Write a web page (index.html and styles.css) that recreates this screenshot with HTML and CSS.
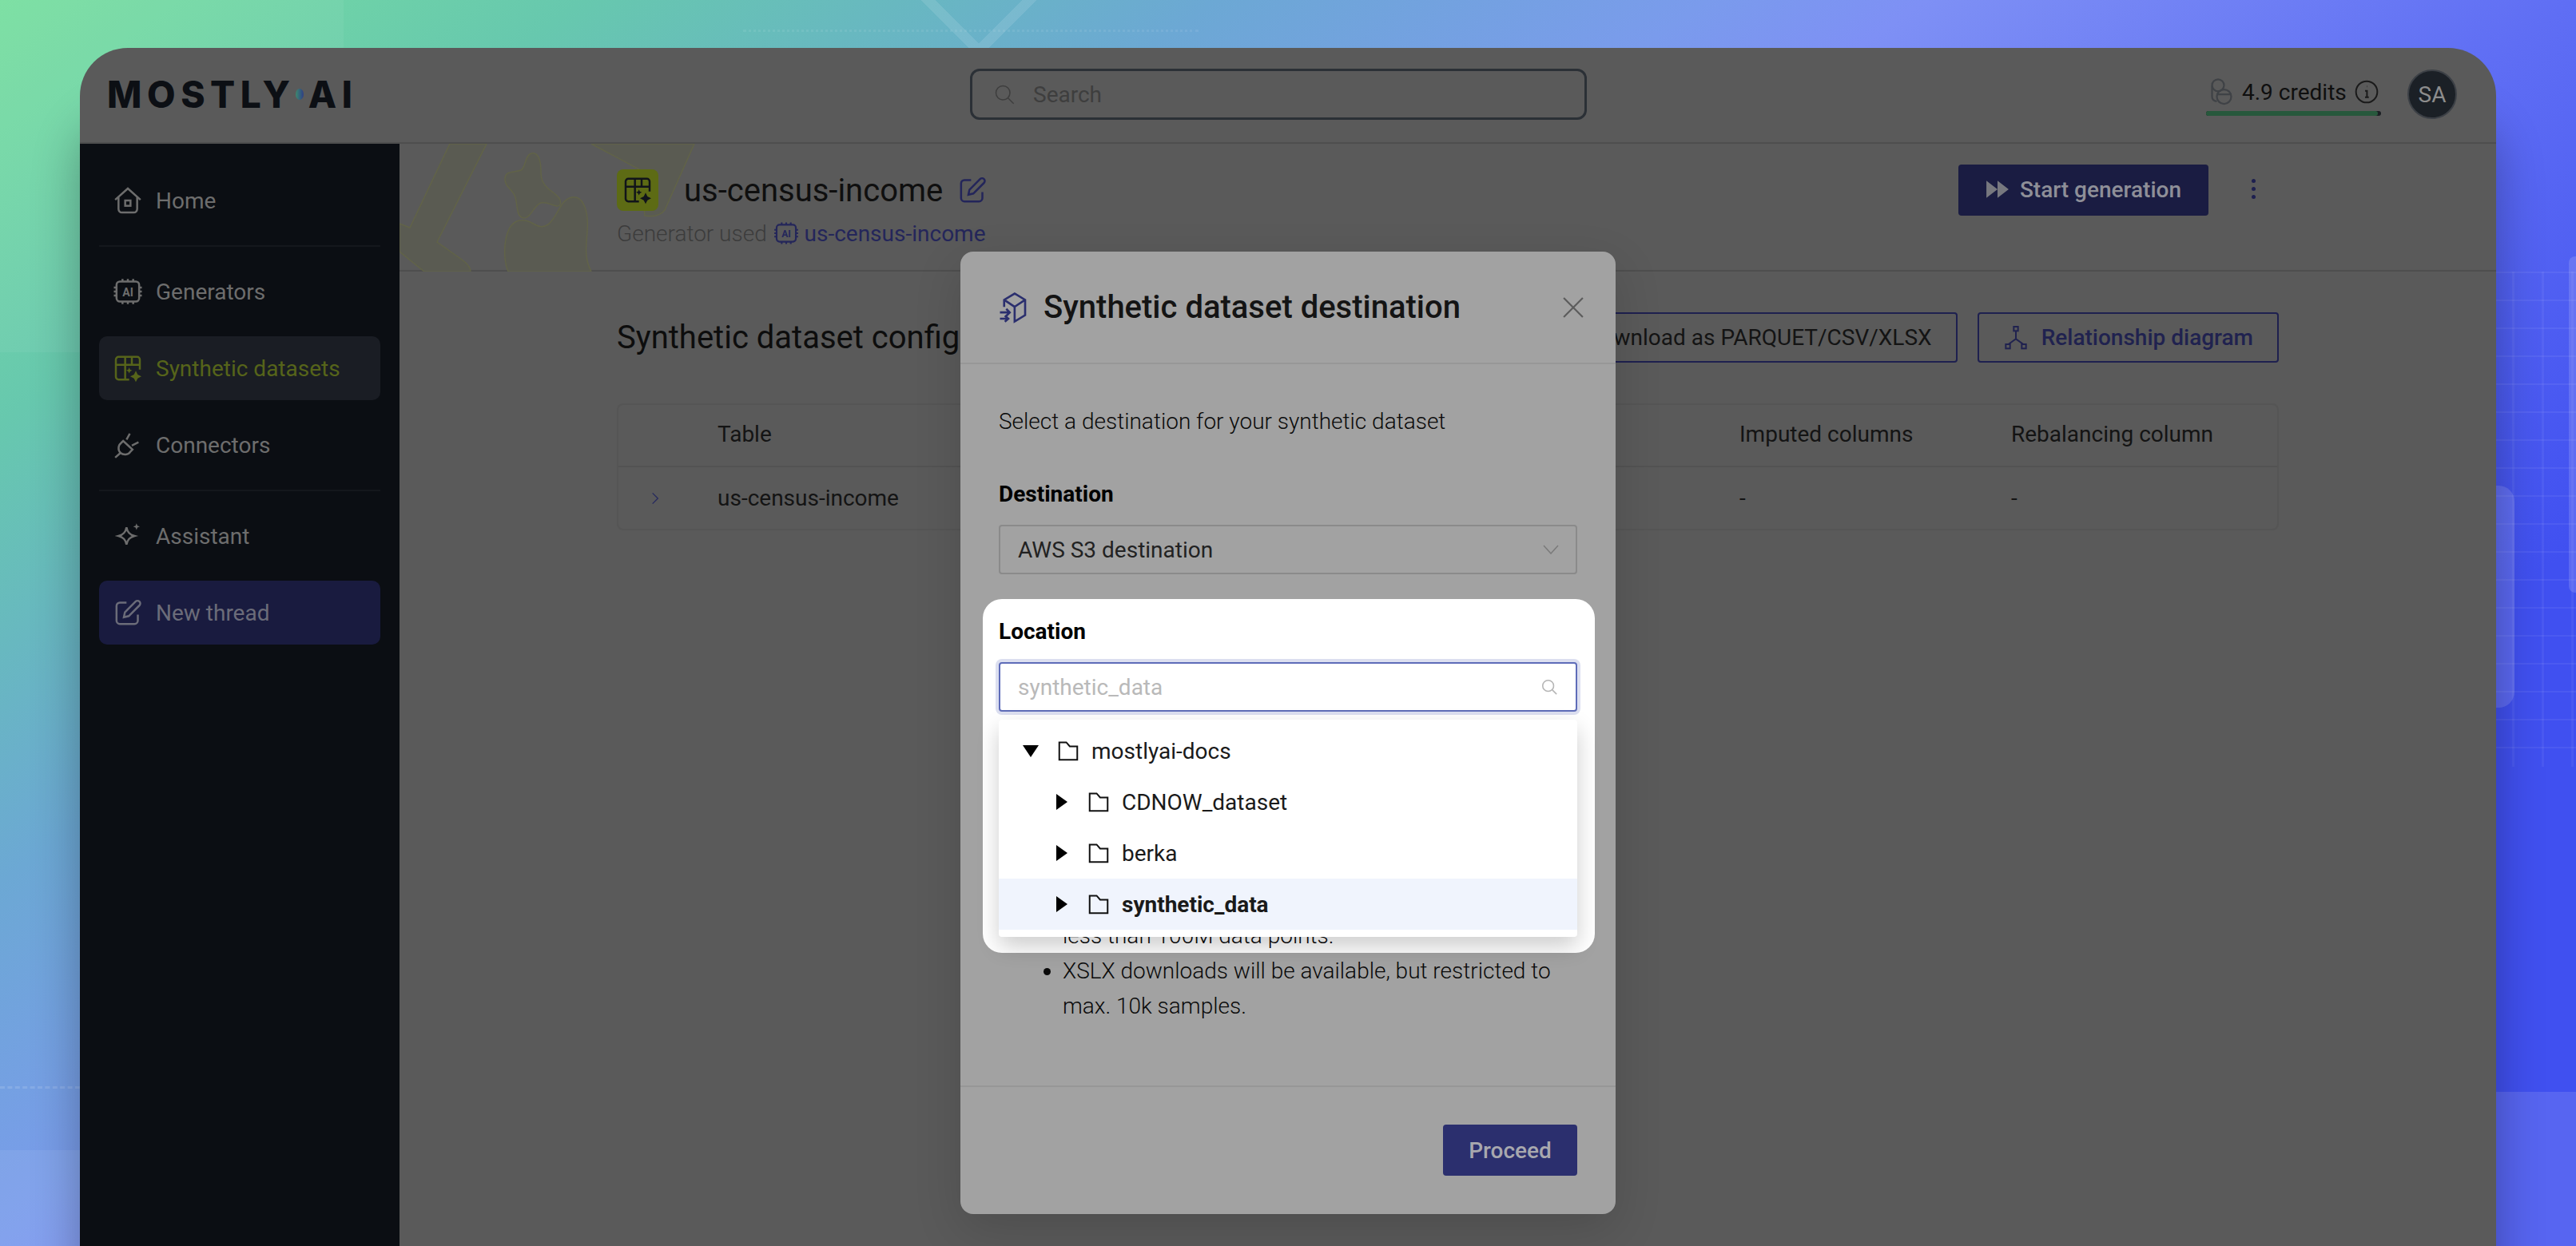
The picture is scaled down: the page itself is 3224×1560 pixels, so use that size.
FILE: index.html
```html
<!DOCTYPE html>
<html lang="en">
<head>
  <meta charset="UTF-8" />
  <title>Synthetic dataset destination</title>
  <link rel="stylesheet" href="styles.css">
</head>
<body>
  <svg class="sprite" aria-hidden="true">
    <symbol id="i-home" viewBox="0 0 24 24"><path d="M2.500 11.500 12 3l9.500 8.500M5 9.500V18.500a2.500 2.500 0 0 0 2.500 2.500h9a2.500 2.500 0 0 0 2.500-2.500V9.500"/><rect x="10" y="12" width="4" height="4"/></symbol>
    <symbol id="i-chip" viewBox="0 0 24 24"><rect x="3.500" y="4.500" width="17" height="15" rx="2.500"/><path d="M8 2.500v2M12 2.500v2M16 2.500v2M8 19.500v2M12 19.500v2M16 19.500v2M1.500 9h2M1.500 12h2M1.500 15h2M20.500 9h2M20.500 12h2M20.500 15h2"/><text x="12" y="15.500" text-anchor="middle" class="chip-text">AI</text></symbol>
    <symbol id="i-table" viewBox="0 0 24 24"><path d="M13 20.500H5a2 2 0 0 1-2-2v-13a2 2 0 0 1 2-2h14a2 2 0 0 1 2 2V13M3 9.500h18M10 3.500v17M15 3.500v6"/><path class="solid" d="m18 14 1.400 2.800 2.800 1.400-2.800 1.400L18 22.400l-1.400-2.800-2.800-1.400 2.800-1.400zM13 11.500l.7 1.500 1.500.7-1.500.7-.7 1.500-.7-1.500-1.500-.7 1.500-.7z"/></symbol>
    <symbol id="i-plug" viewBox="0 0 24 24"><path d="M2.500 21.500 6.500 18M6.500 18a5 5 0 0 1 .5-7.500l1.500-1.500 7 6.500-1.500 1.500a5 5 0 0 1-7.500 1zM11 8 13.500 3.500M15 12.500l5-2.500"/></symbol>
    <symbol id="i-spark" viewBox="0 0 24 24"><path d="M11 5.500c.7 3.800 2.300 5.500 6 6.500-3.700 1-5.300 2.700-6 6.500-.7-3.800-2.300-5.500-6-6.500 3.700-1 5.300-2.700 6-6.500z"/><path class="solid" d="m18.500 2.500.7 1.800 1.800.7-1.800.7-.7 1.800-.7-1.800-1.800-.7 1.800-.7z"/></symbol>
    <symbol id="i-edit" viewBox="0 0 24 24"><path d="M11 4.500H6a2.500 2.500 0 0 0-2.500 2.500v11A2.500 2.500 0 0 0 6 20.500h11a2.500 2.500 0 0 0 2.500-2.500v-4.500M9 15.500l.8-3.800 8-8a2 2 0 0 1 2.900 2.900l-8 8z"/></symbol>
    <symbol id="i-search" viewBox="0 0 24 24"><circle cx="10.500" cy="10.500" r="7.500"/><path d="m16 16 6 6"/></symbol>
    <symbol id="i-folder" viewBox="0 0 24 24"><path d="M3 3.500V21h18V7.500h-7.500L10 3.500z"/></symbol>
    <symbol id="i-cube" viewBox="0 0 24 24"><path d="M5 11.500V6.500l7.500-4.500L20 6.500v11L12.500 22V11.500M5 6.500l7.500 5L20 6.500"/><path d="M2 15.500h7M6.500 13l2.500 2.500L6.500 18M2 20h6M5.500 17.800 8 20l-2.500 2.200"/></symbol>
    <symbol id="i-rel" viewBox="0 0 24 24"><rect x="10" y="1.500" width="4" height="4"/><rect x="2.500" y="18" width="4" height="4"/><rect x="17.500" y="18" width="4" height="4"/><path d="M12 5.500V13L5 18M12 13l7 5"/></symbol>
    <symbol id="i-coins" viewBox="0 0 24 24"><circle cx="10" cy="6.500" r="5"/><circle cx="15" cy="16" r="6"/><path d="M5 7v9c0 2 1.500 3.500 4 4M15 13.500v.1M10 14h10"/></symbol>
    <symbol id="i-info" viewBox="0 0 24 24"><circle cx="12" cy="12" r="10"/><path d="M10.500 11H12.300V17M10.500 17H14"/><path d="M12 7h.3"/></symbol>
  </svg>

  <div class="backdrop">
    <div class="bg-panel bg-panel-tl"></div>
    <div class="bg-panel bg-panel-bl"></div>
    <div class="bg-panel bg-panel-br"></div>
    <div class="bg-chevron"></div>
    <div class="bg-dots"></div>
    <div class="bg-dash"></div>
    <div class="bg-grid"></div>
    <div class="bg-can bg-can-a"></div>
    <div class="bg-can bg-can-b"></div>
  </div>

  <div class="window">
    <header class="topbar">
      <div class="logo">MOSTLY<span class="logo-dot"></span>AI</div>
      <div class="search">
        <svg class="ico search-ico"><use href="#i-search"/></svg>
        <span>Search</span>
      </div>
      <div class="account">
        <div class="credits">
          <div class="credits-row">
            <svg class="ico coins"><use href="#i-coins"/></svg>
            <span>4.9 credits</span>
            <svg class="ico info"><use href="#i-info"/></svg>
          </div>
          <div class="credits-bar"><div class="credits-fill"></div></div>
        </div>
        <div class="avatar">SA</div>
      </div>
    </header>

    <div class="main">
      <nav class="sidebar">
        <a class="nav-item"><svg class="ico"><use href="#i-home"/></svg>Home</a>
        <div class="nav-rule"></div>
        <a class="nav-item"><svg class="ico"><use href="#i-chip"/></svg>Generators</a>
        <a class="nav-item active"><svg class="ico"><use href="#i-table"/></svg>Synthetic datasets</a>
        <a class="nav-item"><svg class="ico"><use href="#i-plug"/></svg>Connectors</a>
        <div class="nav-rule"></div>
        <a class="nav-item"><svg class="ico"><use href="#i-spark"/></svg>Assistant</a>
        <a class="nav-item new-thread"><svg class="ico"><use href="#i-edit"/></svg>New thread</a>
      </nav>

      <section class="content">
        <div class="subhead">
          <svg class="subhead-art" viewBox="0 0 400 160">
            <path d="M0 100l13 5L63 0h46L47 123l31 22q11 8 11 15H31L0 135z"/>
            <path d="M240 0H369L332 83q-8 10-25 7L300 32z"/>
            <path d="M165 12c9-2 12 10 12 22 0 10 2 16 9 22 10 8 18 13 15 20-3 6-14-4-24-2-9 3-13 20-22 19-9-2-7-15-10-26-3-10-14-13-13-24 1-10 13-7 20-10 6-3 5-19 13-21z"/>
            <path d="M136 160c-8-18-6-60 14-64 16-3 22 14 36 5 13-10 14-31 30-34 14-2 21 17 19 43-2 22-3 35 5 50z"/>
          </svg>
          <div class="subhead-left">
            <div class="title-row">
              <div class="tile"><svg class="ico"><use href="#i-table"/></svg></div>
              <h1>us-census-income</h1>
              <svg class="ico title-edit"><use href="#i-edit"/></svg>
            </div>
            <div class="used">Generator used <svg class="ico"><use href="#i-chip"/></svg><a>us-census-income</a></div>
          </div>
          <div class="subhead-right">
            <button class="btn-start">
              <svg class="start-ico" viewBox="0 0 28 24"><path d="M1 2l13 10-13 10zM14 2l13 10-13 10z"/></svg>
              Start generation
            </button>
            <div class="kebab"><i></i><i></i><i></i></div>
          </div>
        </div>

        <div class="config">
          <div class="config-head">
            <h2>Synthetic dataset configuration</h2>
            <div class="config-actions">
              <button class="btn-line">Download as PARQUET/CSV/XLSX</button>
              <button class="btn-line btn-rel"><svg class="ico"><use href="#i-rel"/></svg>Relationship diagram</button>
            </div>
          </div>
          <div class="tbl">
            <div class="tbl-row tbl-top">
              <span></span><span>Table</span><span>Imputed columns</span><span>Rebalancing column</span>
            </div>
            <div class="tbl-row">
              <svg class="row-chev" viewBox="0 0 12 20"><path d="M2 2l8 8-8 8"/></svg>
              <span>us-census-income</span><span>-</span><span>-</span>
            </div>
          </div>
        </div>
      </section>
    </div>
  </div>

  <div class="overlay">
    <div class="modal">
      <div class="modal-head">
        <svg class="ico modal-ico"><use href="#i-cube"/></svg>
        <h3>Synthetic dataset destination</h3>
        <svg class="modal-close" viewBox="0 0 24 24"><path d="M1 1l22 22M23 1L1 23"/></svg>
      </div>
      <div class="modal-body">
        <p class="intro">Select a destination for your synthetic dataset</p>
        <label class="field-label">Destination</label>
        <div class="select">
          <span>AWS S3 destination</span>
          <svg class="select-chev" viewBox="0 0 20 12"><path d="M1 1l9 10 9-10"/></svg>
        </div>

        <div class="spotlight"></div>
        <div class="location">
          <label class="field-label">Location</label>
          <div class="loc-input">
            <span>synthetic_data</span>
            <svg class="ico loc-search"><use href="#i-search"/></svg>
          </div>
          <div class="tree">
            <div class="tree-row">
              <svg class="tri" viewBox="0 0 24 24"><path d="M2 5h20L12 20z"/></svg>
              <svg class="ico folder"><use href="#i-folder"/></svg>mostlyai-docs
            </div>
            <div class="tree-row nested">
              <svg class="tri" viewBox="0 0 24 24"><path d="M6 2l14 10L6 22z"/></svg>
              <svg class="ico folder"><use href="#i-folder"/></svg>CDNOW_dataset
            </div>
            <div class="tree-row nested">
              <svg class="tri" viewBox="0 0 24 24"><path d="M6 2l14 10L6 22z"/></svg>
              <svg class="ico folder"><use href="#i-folder"/></svg>berka
            </div>
            <div class="tree-row nested selected">
              <svg class="tri" viewBox="0 0 24 24"><path d="M6 2l14 10L6 22z"/></svg>
              <svg class="ico folder"><use href="#i-folder"/></svg>synthetic_data
            </div>
          </div>
        </div>

        <ul class="notes">
          <li class="note-tail">less than 100M data points.</li>
          <li>XSLX downloads will be available, but restricted to max. 10k samples.</li>
        </ul>
      </div>
      <div class="modal-foot">
        <button class="btn-proceed">Proceed</button>
      </div>
    </div>
  </div>
</body>
</html>
```

FILE: styles.css
```css
* {
  box-sizing: border-box;
}

html, body {
  margin: 0;
  height: 100%;
}

body {
  position: relative;
  height: 1560px;
  padding: 60px 100px 0;
  overflow: hidden;
  font-family: Roboto, "Liberation Sans", sans-serif;
  font-size: 28px;
  color: #111;
  background: linear-gradient(144deg, #78dfa0 0, #67c8ae 430px, #68b8c0 662px, #6ca8d4 894px, #7a9bec 1256px, #7e90f5 1416px, #5f6ef4 1894px, #4050f0 2450px);
}

.sprite {
  display: none;
}

.ico {
  width: 34px;
  height: 34px;
  flex: none;
  fill: none;
  stroke: currentColor;
  stroke-width: 1.5;
}

.solid {
  fill: currentColor;
  stroke: none;
}

.chip-text {
  font-family: Roboto, sans-serif;
  font-size: 8.500px;
  font-weight: 700;
  fill: currentColor;
  stroke: none;
}

/* background decoration */
.backdrop {
  position: absolute;
  inset: 0;
}

.bg-panel {
  position: absolute;
  background: rgba(255, 255, 255, 0.05);
}

.bg-panel-tl {
  left: 0;
  top: 0;
  width: 430px;
  height: 441px;
}

.bg-panel-bl {
  left: 0;
  top: 1440px;
  width: 100px;
  height: 120px;
  background: rgba(255, 255, 255, 0.07);
}

.bg-panel-br {
  right: 0;
  top: 1367px;
  width: 100px;
  height: 193px;
  background: rgba(255, 255, 255, 0.12);
}

.bg-chevron {
  position: absolute;
  left: 1135px;
  top: -138px;
  width: 180px;
  height: 180px;
  border: solid rgba(255, 255, 255, 0.11);
  border-width: 0 14px 14px 0;
  border-radius: 12px;
  transform: rotate(45deg) scale(0.95);
}

.bg-dots {
  position: absolute;
  left: 930px;
  top: 37px;
  width: 570px;
  border-top: 3px dotted rgba(255, 255, 255, 0.08);
}

.bg-dash {
  position: absolute;
  left: 0;
  top: 1360px;
  width: 100px;
  border-top: 3px dashed rgba(255, 255, 255, 0.13);
}

.bg-grid {
  position: absolute;
  right: 0;
  top: 340px;
  width: 100px;
  height: 620px;
  background:
    linear-gradient(rgba(255, 255, 255, 0.06) 2px, transparent 2px) 0 0 / 100% 35px,
    linear-gradient(90deg, rgba(255, 255, 255, 0.05) 3px, transparent 3px) 20px 0 / 37px 100%;
}

.bg-can {
  position: absolute;
  background: rgba(255, 255, 255, 0.14);
}

.bg-can-a {
  left: 3124px;
  top: 608px;
  width: 23px;
  height: 278px;
  border-radius: 0 20px 20px 0;
}

.bg-can-b {
  left: 3215px;
  top: 321px;
  width: 9px;
  height: 421px;
  border-radius: 8px 0 0 8px;
}

/* app window */
.window {
  position: relative;
  display: flex;
  flex-direction: column;
  height: 1500px;
  border-radius: 60px 60px 0 0;
  background: #5a5a5a;
  box-shadow: 0 90px 60px rgba(0, 0, 0, 0.3);
  overflow: hidden;
}

.topbar {
  display: grid;
  grid-template-columns: 1080px 772px 1fr;
  align-items: center;
  height: 120px;
  padding: 0 49px 2px 34px;
  border-bottom: 2px solid #4e4e4e;
}

.logo {
  display: flex;
  align-items: center;
  font-family: Inter, Roboto, sans-serif;
  font-size: 46px;
  font-weight: 800;
  letter-spacing: 6.600px;
  color: #0c0f14;
}

.logo-dot {
  width: 10px;
  height: 14px;
  margin: 0 6px 0 0;
  border-radius: 50%;
  background: linear-gradient(90deg, #3c8a70, #2e3e86);
}

.search {
  display: flex;
  align-items: center;
  gap: 22px;
  height: 64px;
  padding-left: 26px;
  border: 3px solid #2b3036;
  border-radius: 12px;
  color: #3e3e3e;
}

.search-ico {
  width: 28px;
  height: 28px;
  stroke-width: 1.300;
}

.account {
  display: flex;
  justify-content: flex-end;
  align-items: center;
  gap: 33px;
}

.credits {
  width: 219px;
  margin-top: 6px;
}

.credits-row {
  display: flex;
  align-items: center;
  gap: 9px;
  color: #0f0f0f;
  white-space: nowrap;
}

.coins {
  width: 36px;
  height: 36px;
  color: #3f4246;
}

.info {
  width: 32px;
  height: 32px;
  color: #1a1a1a;
}

.credits-bar {
  height: 6px;
  margin-top: 6px;
  border-radius: 3px;
  background: #1b1f24;
}

.credits-fill {
  width: 98%;
  height: 100%;
  border-radius: 3px;
  background: #27583c;
}

.avatar {
  display: flex;
  justify-content: center;
  align-items: center;
  width: 62px;
  height: 62px;
  border: 2px solid #3c4046;
  border-radius: 50%;
  background: #1b2026;
  color: #8d8d8d;
}

.main {
  display: flex;
  flex: 1;
  min-height: 0;
}

/* sidebar */
.sidebar {
  display: flex;
  flex-direction: column;
  gap: 16px;
  width: 400px;
  padding: 31px 24px 0;
  background: #0b0e13;
  color: #6d6d6d;
}

.nav-item {
  display: flex;
  align-items: center;
  gap: 15px;
  height: 80px;
  padding-left: 16px;
  border-radius: 10px;
}

.nav-item .ico {
  width: 40px;
  height: 40px;
}

.nav-rule {
  height: 2px;
  background: #14171c;
}

.nav-item.active {
  background: #1a1d24;
  color: #56641a;
}

.nav-item.new-thread {
  background: #191b3f;
  color: #6b6c79;
}

/* page content */
.content {
  flex: 1;
  min-width: 0;
}

.subhead {
  position: relative;
  display: flex;
  justify-content: space-between;
  height: 160px;
  padding: 32px 288px 0 272px;
  border-bottom: 2px solid #4e4e4e;
}

.subhead-art {
  position: absolute;
  left: 0;
  top: 0;
  width: 400px;
  height: 160px;
  fill: #5a5b52;
  stroke: #616348;
  stroke-width: 1.500;
}

.subhead-left,
.subhead-right {
  position: relative;
}

.title-row {
  display: flex;
  align-items: center;
  height: 52px;
}

.tile {
  display: flex;
  justify-content: center;
  align-items: center;
  width: 52px;
  height: 52px;
  border-radius: 8px;
  background: #5d6b14;
  color: #11141a;
}

.tile .ico {
  width: 40px;
  height: 40px;
}

h1 {
  margin: 0 17px 0 32px;
  font-size: 40px;
  font-weight: 400;
  color: #0f0f0f;
}

.title-edit {
  color: #23255a;
  width: 40px;
  height: 40px;
}

.used {
  display: flex;
  align-items: center;
  margin-top: 9px;
  height: 38px;
  font-weight: 300;
  color: #3c3c3c;
  white-space: pre;
}

.used .ico {
  width: 34px;
  height: 36px;
  margin: 0 6px 0 0;
  color: #24265a;
}

.used a {
  font-weight: 400;
  color: #24265a;
}

.subhead-right {
  display: flex;
  gap: 40px;
  margin-top: -6px;
}

.btn-start {
  display: flex;
  align-items: center;
  gap: 13px;
  height: 64px;
  padding: 0 34px 2px;
  border: 0;
  border-radius: 4px;
  background: #1a1c42;
  color: #8e8f98;
  font: 500 28px Roboto, sans-serif;
}

.start-ico {
  width: 30px;
  height: 28px;
  fill: #77787f;
}

.kebab {
  display: flex;
  flex-direction: column;
  align-items: center;
  gap: 5px;
  width: 32px;
  padding-top: 18px;
}

.kebab i {
  width: 5px;
  height: 5px;
  border-radius: 50%;
  background: #1e204f;
}

.config {
  padding: 51px 272px 0;
}

.config-head {
  display: flex;
  justify-content: space-between;
  align-items: center;
}

h2 {
  margin: 0;
  font-size: 40px;
  font-weight: 400;
  color: #0d0d0d;
}

.config-actions {
  display: flex;
  gap: 25px;
}

.btn-line {
  display: flex;
  align-items: center;
  gap: 16px;
  height: 63px;
  padding: 0 30px;
  border: 2px solid #1e204f;
  border-radius: 4px;
  background: none;
  color: #141414;
  font: 400 28px Roboto, sans-serif;
}

.btn-rel {
  color: #20224f;
  font-weight: 500;
}

.btn-rel .ico {
  width: 32px;
  height: 32px;
}

.tbl {
  margin-top: 51px;
  border: 2px solid #555;
  border-radius: 8px;
  color: #141414;
}

.tbl-row {
  display: grid;
  grid-template-columns: 124px 1279px 340px 1fr;
  align-items: center;
  height: 77px;
}

.tbl-top {
  height: 78px;
  padding-bottom: 3px;
  border-bottom: 2px solid #535353;
}

.row-chev {
  width: 10px;
  height: 18px;
  margin-left: 41px;
  fill: none;
  stroke: #25285f;
  stroke-width: 1.500;
}

/* modal */
.overlay {
  position: absolute;
  inset: 0;
  display: flex;
  justify-content: center;
  align-items: flex-start;
  padding-top: 315px;
}

.modal {
  position: relative;
  display: flex;
  flex-direction: column;
  width: 820px;
  height: 1205px;
  border-radius: 16px;
  background: #a2a2a2;
  box-shadow: 0 20px 60px rgba(0, 0, 0, 0.14);
}

.modal-head {
  display: flex;
  align-items: center;
  height: 141px;
  padding: 0 40px 0 46px;
  border-bottom: 2px solid #979797;
  flex: none;
}

.modal-ico {
  width: 42px;
  height: 42px;
  color: #2b2f6e;
}

h3 {
  flex: 1;
  margin: 0 0 0 16px;
  font-size: 40px;
  font-weight: 500;
  color: #141414;
}

.modal-close {
  width: 26px;
  height: 26px;
  fill: none;
  stroke: #5c5c5c;
  stroke-width: 2;
}

.modal-body {
  position: relative;
  flex: 1;
  padding: 0 48px;
}

.intro {
  margin: 50px 0 0;
  line-height: 44px;
  font-weight: 300;
  color: #0a0a0a;
}

.field-label {
  display: block;
  font-weight: 700;
  line-height: 40px;
  color: #000;
}

.intro + .field-label {
  margin-top: 49px;
}

.select {
  display: flex;
  justify-content: space-between;
  align-items: center;
  height: 62px;
  margin-top: 18px;
  padding: 0 21px 0 22px;
  border: 2px solid #8a8a8a;
  border-radius: 4px;
  color: #222;
}

.select-chev {
  width: 20px;
  height: 12px;
  fill: none;
  stroke: #7a7a7a;
  stroke-width: 1.500;
}

/* the highlighted field sits on a white card over the dimmed modal */
.spotlight {
  position: absolute;
  left: 28px;
  right: 26px;
  top: 294px;
  height: 443px;
  border-radius: 24px;
  background: #fff;
  overflow: hidden;
}

.location {
  position: relative;
  z-index: 2;
  margin-top: 52px;
}

.loc-input {
  display: flex;
  justify-content: space-between;
  align-items: center;
  height: 62px;
  margin-top: 18px;
  padding: 0 24px 0 22px;
  border: 2px solid #5e6cb8;
  border-radius: 4px;
  box-shadow: 0 0 0 4px #dcdff0;
  background: #fff;
  color: #b9b9b9;
}

.loc-search {
  width: 22px;
  height: 22px;
  margin-right: -2px;
  color: #b5b5b5;
  stroke-width: 1.700;
}

.tree {
  position: absolute;
  left: 0;
  right: 0;
  top: 130px;
  height: 272px;
  padding-top: 7px;
  border-radius: 4px;
  background: #fff;
  box-shadow: 0 12px 28px rgba(0, 0, 0, 0.2);
  color: #1a1a1a;
}

.tree-row {
  display: flex;
  align-items: center;
  height: 64px;
  padding-left: 28px;
}

.tree-row.nested {
  padding-left: 66px;
}

.tree-row.selected {
  background: #f0f4fd;
  font-weight: 700;
}

.tri {
  width: 24px;
  height: 24px;
  margin-right: 20px;
  fill: #000;
}

.folder {
  width: 30px;
  height: 30px;
  margin-right: 14px;
  color: #111;
  stroke-width: 1.600;
}

.notes {
  position: relative;
  z-index: 1;
  margin: 259px 0 0;
  padding: 0 0 0 80px;
  line-height: 44px;
  font-weight: 300;
  color: #0a0a0a;
  list-style: disc;
}

.note-tail {
  list-style: none;
}

.modal-foot {
  display: flex;
  justify-content: flex-end;
  flex: none;
  height: 161px;
  padding: 47px 48px 0;
  border-top: 2px solid #979797;
}

.btn-proceed {
  width: 168px;
  height: 64px;
  border: 0;
  border-radius: 4px;
  background: #2b2f6e;
  color: #a8a8ae;
  font: 500 28px Roboto, sans-serif;
}
```
